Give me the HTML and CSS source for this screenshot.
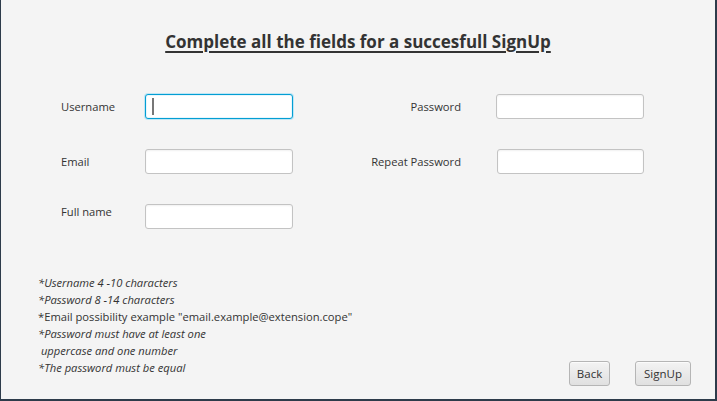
FILE: index.html
```html
<!DOCTYPE html>
<html>
<head>
<meta charset="utf-8">
<link rel="stylesheet" href="styles.css">
</head>
<body>
<div class="window">
  <h1 class="title">Complete all the fields for a succesfull SignUp</h1>
  <div class="form">
    <label class="lbl">Username</label>
    <div class="field focused"><span class="caret"></span></div>
    <label class="lbl lbl-right">Password</label>
    <div class="field"></div>

    <label class="lbl">Email</label>
    <div class="field"></div>
    <label class="lbl lbl-right">Repeat Password</label>
    <div class="field shift"></div>

    <label class="lbl lbl-high">Full name</label>
    <div class="field"></div>
    <span></span>
    <span></span>
  </div>
  <div class="bottom">
    <div class="notes">
      <div class="it">*Username 4 -10 characters</div>
      <div class="it">*Password 8 -14 characters</div>
      <div>*Email possibility example "email.example@extension.cope"</div>
      <div class="it">*Password must have at least one</div>
      <div class="it">&nbsp;uppercase and one number</div>
      <div class="it">*The password must be equal</div>
    </div>
    <div class="buttons">
      <button class="btn back">Back</button>
      <button class="btn signup">SignUp</button>
    </div>
  </div>
</div>
</body>
</html>
```

FILE: styles.css
```css
html, body {
  margin: 0;
  padding: 0;
}
body {
  width: 717px;
  height: 401px;
  overflow: hidden;
  font-family: "Open Sans", "Noto Sans", sans-serif;
  color: #333333;
}
.window {
  box-sizing: border-box;
  width: 717px;
  height: 401px;
  background: #f4f4f4;
  border-left: 1px solid #2d3b4a;
  border-right: 2px solid #2d3b4a;
  border-bottom: 2px solid #2d3b4a;
  display: flex;
  flex-direction: column;
}
.title {
  margin: 31px 0 0 0;
  text-align: center;
  font-size: 17px;
  font-weight: bold;
  line-height: 22px;
  text-decoration: underline;
  text-decoration-thickness: 2px;
  text-underline-offset: 3px;
  color: #333333;
}
.form {
  margin-top: 41px;
  padding-left: 60px;
  display: grid;
  grid-template-columns: 84px 148px 203px 148px;
  grid-auto-rows: 25px;
  row-gap: 30px;
  align-items: center;
}
.lbl {
  font-size: 11.2px;
  color: #333333;
}
.lbl-high {
  align-self: start;
  margin-top: 0;
}
.lbl-right {
  text-align: right;
  padding-right: 35px;
}
.field {
  box-sizing: border-box;
  height: 25px;
  background: #ffffff;
  border: 1px solid #c3c3c3;
  border-radius: 3px;
  box-shadow: inset 0 1px 2px rgba(0,0,0,0.06);
  position: relative;
}
.field.shift {
  margin-left: 1px;
}
.field.focused {
  border: 1px solid #039ed3;
  box-shadow: 0 0 0 1px #bfe6f5, inset 0 0 0 1px #e8f6fc;
}
.caret {
  position: absolute;
  left: 6px;
  top: 3px;
  width: 2px;
  height: 17px;
  background: #777777;
}
.bottom {
  flex: 1;
  display: flex;
  justify-content: space-between;
  align-items: flex-end;
  padding: 0 24px 13px 37px;
}
.notes {
  font-size: 11.2px;
  line-height: 17px;
  color: #333333;
  padding-bottom: 10px;
}
.it {
  font-style: italic;
}
.buttons {
  display: flex;
  gap: 25px;
}
.btn {
  box-sizing: border-box;
  height: 25px;
  padding: 0 6px;
  font-family: "Open Sans", "Noto Sans", sans-serif;
  font-size: 11.5px;
  color: #333333;
  border: 1px solid #b5b5b5;
  border-radius: 3px;
  background: linear-gradient(#f3f3f3, #e0e0e0);
  box-shadow: inset 0 1px 0 #fbfbfb;
}
.back {
  width: 41px;
}
.signup {
  width: 56px;
}
```
